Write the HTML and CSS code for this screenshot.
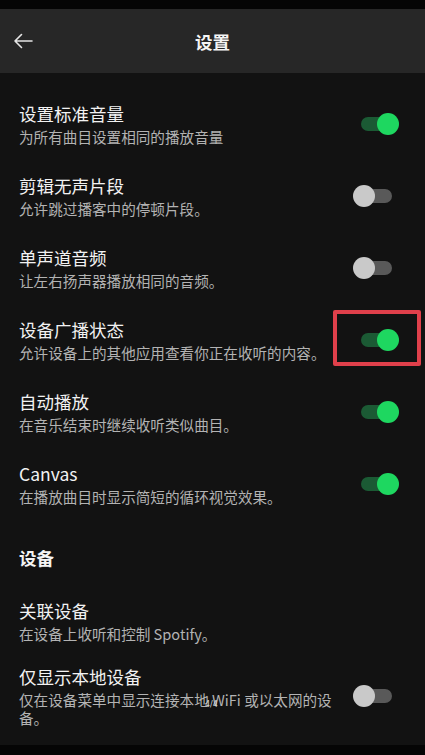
FILE: index.html
```html
<!DOCTYPE html>
<html>
<head>
    <title>设置</title>
    <meta charset="UTF-8">
    <meta name="viewport" content="width=device-width, initial-scale=1.0">
    <link rel="stylesheet" href="styles.css">
</head>
<body>
    <div class="screen">
        <div class="status-bar"></div>

        <header class="top-bar">
            <span class="back">
                <svg width="20" height="16" viewBox="0 0 20 16">
                    <path d="M19 8H2M8.5 1.5L2 8l6.5 6.5" fill="none" stroke="#e6e6e6" stroke-width="1.6" stroke-linecap="round" stroke-linejoin="round"/>
                </svg>
            </span>
            <h1>设置</h1>
            <span></span>
        </header>

        <main class="settings">
            <div class="row">
                <div class="text">
                    <div class="title">设置标准音量</div>
                    <div class="desc">为所有曲目设置相同的播放音量</div>
                </div>
                <span class="switch on"></span>
            </div>
            <div class="row">
                <div class="text">
                    <div class="title">剪辑无声片段</div>
                    <div class="desc">允许跳过播客中的停顿片段。</div>
                </div>
                <span class="switch"></span>
            </div>
            <div class="row">
                <div class="text">
                    <div class="title">单声道音频</div>
                    <div class="desc">让左右扬声器播放相同的音频。</div>
                </div>
                <span class="switch"></span>
            </div>
            <div class="row highlighted">
                <div class="text">
                    <div class="title">设备广播状态</div>
                    <div class="desc">允许设备上的其他应用查看你正在收听的内容。</div>
                </div>
                <span class="switch on"></span>
                <span class="mark"></span>
            </div>
            <div class="row">
                <div class="text">
                    <div class="title">自动播放</div>
                    <div class="desc">在音乐结束时继续收听类似曲目。</div>
                </div>
                <span class="switch on"></span>
            </div>
            <div class="row">
                <div class="text">
                    <div class="title">Canvas</div>
                    <div class="desc">在播放曲目时显示简短的循环视觉效果。</div>
                </div>
                <span class="switch on"></span>
            </div>

            <h2 class="section">设备</h2>

            <div class="row short">
                <div class="text">
                    <div class="title">关联设备</div>
                    <div class="desc">在设备上收听和控制 Spotify。</div>
                </div>
            </div>
            <div class="row">
                <div class="text">
                    <div class="title">仅显示本地设备</div>
                    <div class="desc">仅在设备菜单中显示连接本地 WiFi 或以太网的设备。</div>
                </div>
                <span class="switch"></span>
                <span class="page-count">4/4</span>
            </div>
        </main>

        <div class="nav-bar"></div>
    </div>
</body>
</html>
```

FILE: styles.css
```css
body {
    margin: 0;
    background: #121212;
    color: #f2f2f2;
    font-family: "Noto Sans CJK SC", "Noto Sans", sans-serif;
}
.screen {
    display: flex;
    flex-direction: column;
    height: 755px;
    overflow: hidden;
}
.status-bar { height: 9px; background: #050505; }
.nav-bar { height: 10px; background: #050505; margin-top: auto; }

.top-bar {
    height: 64px;
    background: #272727;
    display: grid;
    grid-template-columns: 60px 1fr 60px;
    align-items: center;
}
.back {
    display: flex;
    padding-left: 13px;
}
.top-bar h1 {
    margin: 0;
    text-align: center;
    font-size: 17.5px;
    font-weight: 700;
    color: #f4f4f4;
}

.settings {
    padding-top: 15px;
}
.row {
    position: relative;
    display: flex;
    align-items: center;
    min-height: 46px;
    padding: 13px 26px 13px 19px;
}
.row.short { padding-bottom: 8px; }
.text {
    flex: 1;
    max-width: 318px;
}
.title {
    font-size: 17.5px;
    line-height: 24px;
    color: #f2f2f2;
}
.desc {
    margin-top: 2px;
    font-size: 14.6px;
    line-height: 18px;
    color: #b3b3b3;
}
.section {
    margin: 0;
    padding: 26px 19px 15px;
    font-size: 17.5px;
    line-height: 24px;
    font-weight: 700;
    color: #f4f4f4;
}

.switch {
    position: relative;
    width: 46px;
    height: 22px;
    margin-left: auto;
    flex-shrink: 0;
}
.switch::before {
    content: "";
    position: absolute;
    left: 8px;
    right: 7px;
    top: 4px;
    height: 14px;
    border-radius: 7px;
    background: #595959;
}
.switch::after {
    content: "";
    position: absolute;
    left: 0;
    top: 0;
    width: 22px;
    height: 22px;
    border-radius: 50%;
    background: #c9c9c9;
}
.switch.on::before { background: #1b5a34; }
.switch.on::after {
    left: auto;
    right: 0;
    background: #1ed760;
}

.mark {
    position: absolute;
    top: 6px;
    right: 4px;
    width: 80px;
    height: 48px;
    border: 4px solid #e0404b;
    border-radius: 2px;
}
.page-count {
    position: absolute;
    left: 205px;
    top: 48px;
    font-family: "DejaVu Sans", sans-serif;
    font-size: 8px;
    color: #d8d8d8;
}
```
